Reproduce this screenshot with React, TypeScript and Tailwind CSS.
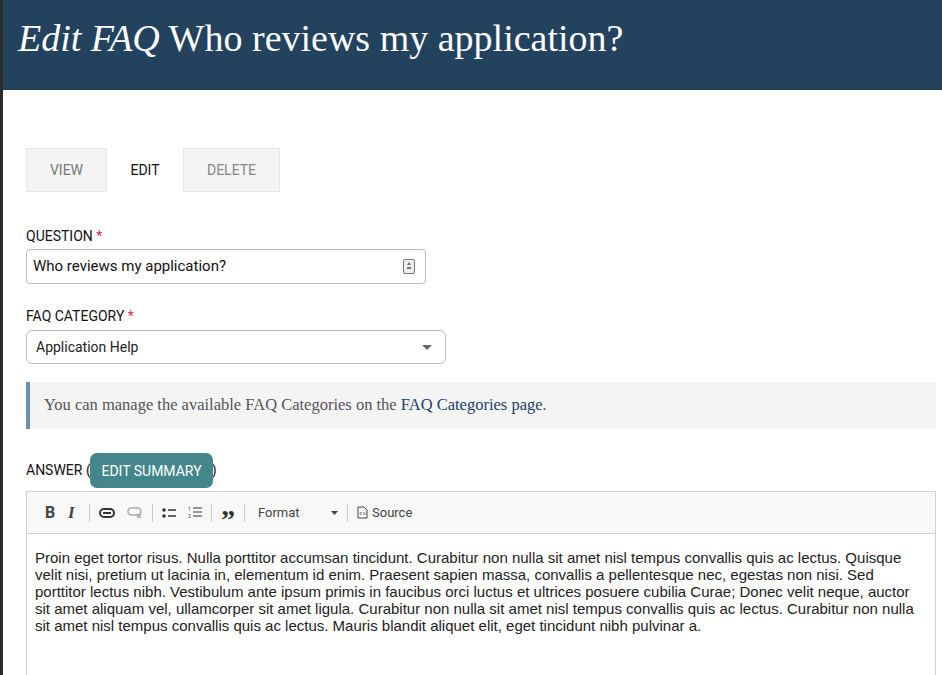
import React from 'react';

const sans = { fontFamily: 'Roboto, "Liberation Sans", sans-serif' };

const Sep = () => <span className="h-[18px] w-px bg-[#c8c8c8]" />;

export default function App() {
  return (
    <div className="flex min-h-[675px] w-[942px] overflow-hidden bg-white">
      <div className="w-[3px] shrink-0 bg-[#2b2b2b]" />
      <div className="flex-1">
        <div className="h-[90px] bg-[#22425e] pl-[15px] pt-[10px] text-[38px] text-white" style={{ fontFamily: '"Liberation Serif", serif' }}>
          <em>Edit FAQ</em> Who reviews my application?
        </div>
        <div className="pl-[23px] pt-[58px]" style={sans}>
          <div className="flex h-[44px] text-[14px]">
            <div className="flex w-[81px] items-center justify-center border border-[#e6e6e6] bg-[#f4f4f4] text-[#777]">VIEW</div>
            <div className="flex w-[76px] items-center justify-center bg-white text-[#111]">EDIT</div>
            <div className="flex w-[97px] items-center justify-center border border-[#e6e6e6] bg-[#f4f4f4] text-[#888]">DELETE</div>
          </div>

          <div className="mt-[36px] h-[16px] text-[14px] leading-[16px] text-[#111]">QUESTION <span className="text-[#e0294a]">*</span></div>
          <div className="mt-[5px] flex h-[35px] w-[400px] items-center justify-between rounded-[4px] border border-[#bbb] pl-[6px] pr-[10px] text-[15px] text-[#111]">
            Who reviews my application?
            <svg width="12" height="15" viewBox="0 0 12 15"><rect x="0.5" y="0.5" width="11" height="14" rx="1.5" fill="#eee" stroke="#777" /><path d="M6 3l2 3H4z M4 8h4v2H4z" fill="#777" /></svg>
          </div>

          <div className="mt-[24px] h-[16px] text-[14px] leading-[16px] text-[#111]">FAQ CATEGORY <span className="text-[#e0294a]">*</span></div>
          <div className="mt-[6px] flex h-[34px] w-[420px] items-center justify-between rounded-[6px] border border-[#bbb] pl-[9px] pr-[13px] text-[14px] text-[#222]">
            Application Help
            <svg width="10" height="5" viewBox="0 0 10 5"><path d="M0 0h10L5 5z" fill="#666" /></svg>
          </div>

          <div className="mt-[18px] flex h-[47px] w-[910px] items-center border-l-[4px] border-[#6f8fb0] bg-[#f4f4f4] pl-[14px] text-[16.5px] text-[#555]" style={{ fontFamily: '"Liberation Serif", serif' }}>
            You can manage the available FAQ Categories on the&nbsp;<span className="text-[#22406a]">FAQ Categories page</span>.
          </div>

          <div className="relative mt-[33px] h-[16px] text-[14px] leading-[16px] text-[#111]">
            ANSWER (<span className="inline-block w-[121px]" />)
            <div className="absolute left-[64px] top-[-9px] flex h-[35px] w-[123px] items-center justify-center rounded-[7px] bg-[#43878a] text-[14px] text-white">EDIT SUMMARY</div>
          </div>

          <div className="mt-[13px] w-[910px] border border-[#d1d1d1]">
            <div className="flex h-[42px] items-center gap-[9px] border-b border-[#d1d1d1] bg-[#f8f8f8] pl-[18px] text-[#444]">
              <span className="w-[14px] text-[16px] font-bold">B</span>
              <span className="w-[12px] text-[17px] font-bold italic" style={{ fontFamily: '"Liberation Serif", serif' }}>I</span>
              <Sep />
              <svg width="16" height="10" viewBox="0 0 16 10"><rect x="1" y="1" width="14" height="8" rx="4" fill="none" stroke="#333" strokeWidth="2" /><path d="M4 5h8" stroke="#333" strokeWidth="2" /></svg>
              <svg className="ml-[3px]" width="16" height="12" viewBox="0 0 16 12"><rect x="1" y="1" width="13" height="7" rx="3.5" fill="none" stroke="#aaa" strokeWidth="1.5" /><path d="M10 7l4 4M14 7l-4 4" stroke="#aaa" strokeWidth="1.5" /></svg>
              <Sep />
              <svg width="14" height="12" viewBox="0 0 14 12"><circle cx="2" cy="3" r="1.8" fill="#333" /><circle cx="2" cy="9" r="1.8" fill="#333" /><path d="M6 3h8M6 9h8" stroke="#333" strokeWidth="1.3" /></svg>
              <svg className="ml-[3px]" width="14" height="13" viewBox="0 0 14 13"><text x="0" y="5" fontSize="5" fill="#333">1</text><text x="0" y="12" fontSize="5" fill="#333">2</text><path d="M5 2h9M5 6h9M5 10h9" stroke="#333" strokeWidth="1.2" /></svg>
              <Sep />
              <span className="h-[14px] text-[28px] font-bold leading-[28px] text-[#333]" style={{ fontFamily: '"Liberation Serif", serif' }}>”</span>
              <Sep />
              <span className="ml-[4px] w-[64px] text-[13px] text-[#444]">Format</span>
              <svg width="7" height="4" viewBox="0 0 7 4"><path d="M0 0h7L3.5 4z" fill="#444" /></svg>
              <Sep />
              <svg width="11" height="13" viewBox="0 0 11 13"><path d="M1 1h6l3 3v8H1z" fill="none" stroke="#444" /><path d="M4.5 6l-1.5 1.5 1.5 1.5M6.5 6l1.5 1.5-1.5 1.5" fill="none" stroke="#444" /></svg>
              <span className="-ml-[5px] text-[13px] text-[#444]">Source</span>
            </div>
            <div className="h-[200px] px-[8px] pt-[15px] text-[15px] leading-[17px] text-[#222]" style={{ fontFamily: '"Liberation Sans", Arial, sans-serif' }}>
              Proin eget tortor risus. Nulla porttitor accumsan tincidunt. Curabitur non nulla sit amet nisl tempus convallis quis ac lectus. Quisque velit nisi, pretium ut lacinia in, elementum id enim. Praesent sapien massa, convallis a pellentesque nec, egestas non nisi. Sed porttitor lectus nibh. Vestibulum ante ipsum primis in faucibus orci luctus et ultrices posuere cubilia Curae; Donec velit neque, auctor sit amet aliquam vel, ullamcorper sit amet ligula. Curabitur non nulla sit amet nisl tempus convallis quis ac lectus. Curabitur non nulla sit amet nisl tempus convallis quis ac lectus. Mauris blandit aliquet elit, eget tincidunt nibh pulvinar a.
            </div>
          </div>
        </div>
      </div>
    </div>
  );
}
